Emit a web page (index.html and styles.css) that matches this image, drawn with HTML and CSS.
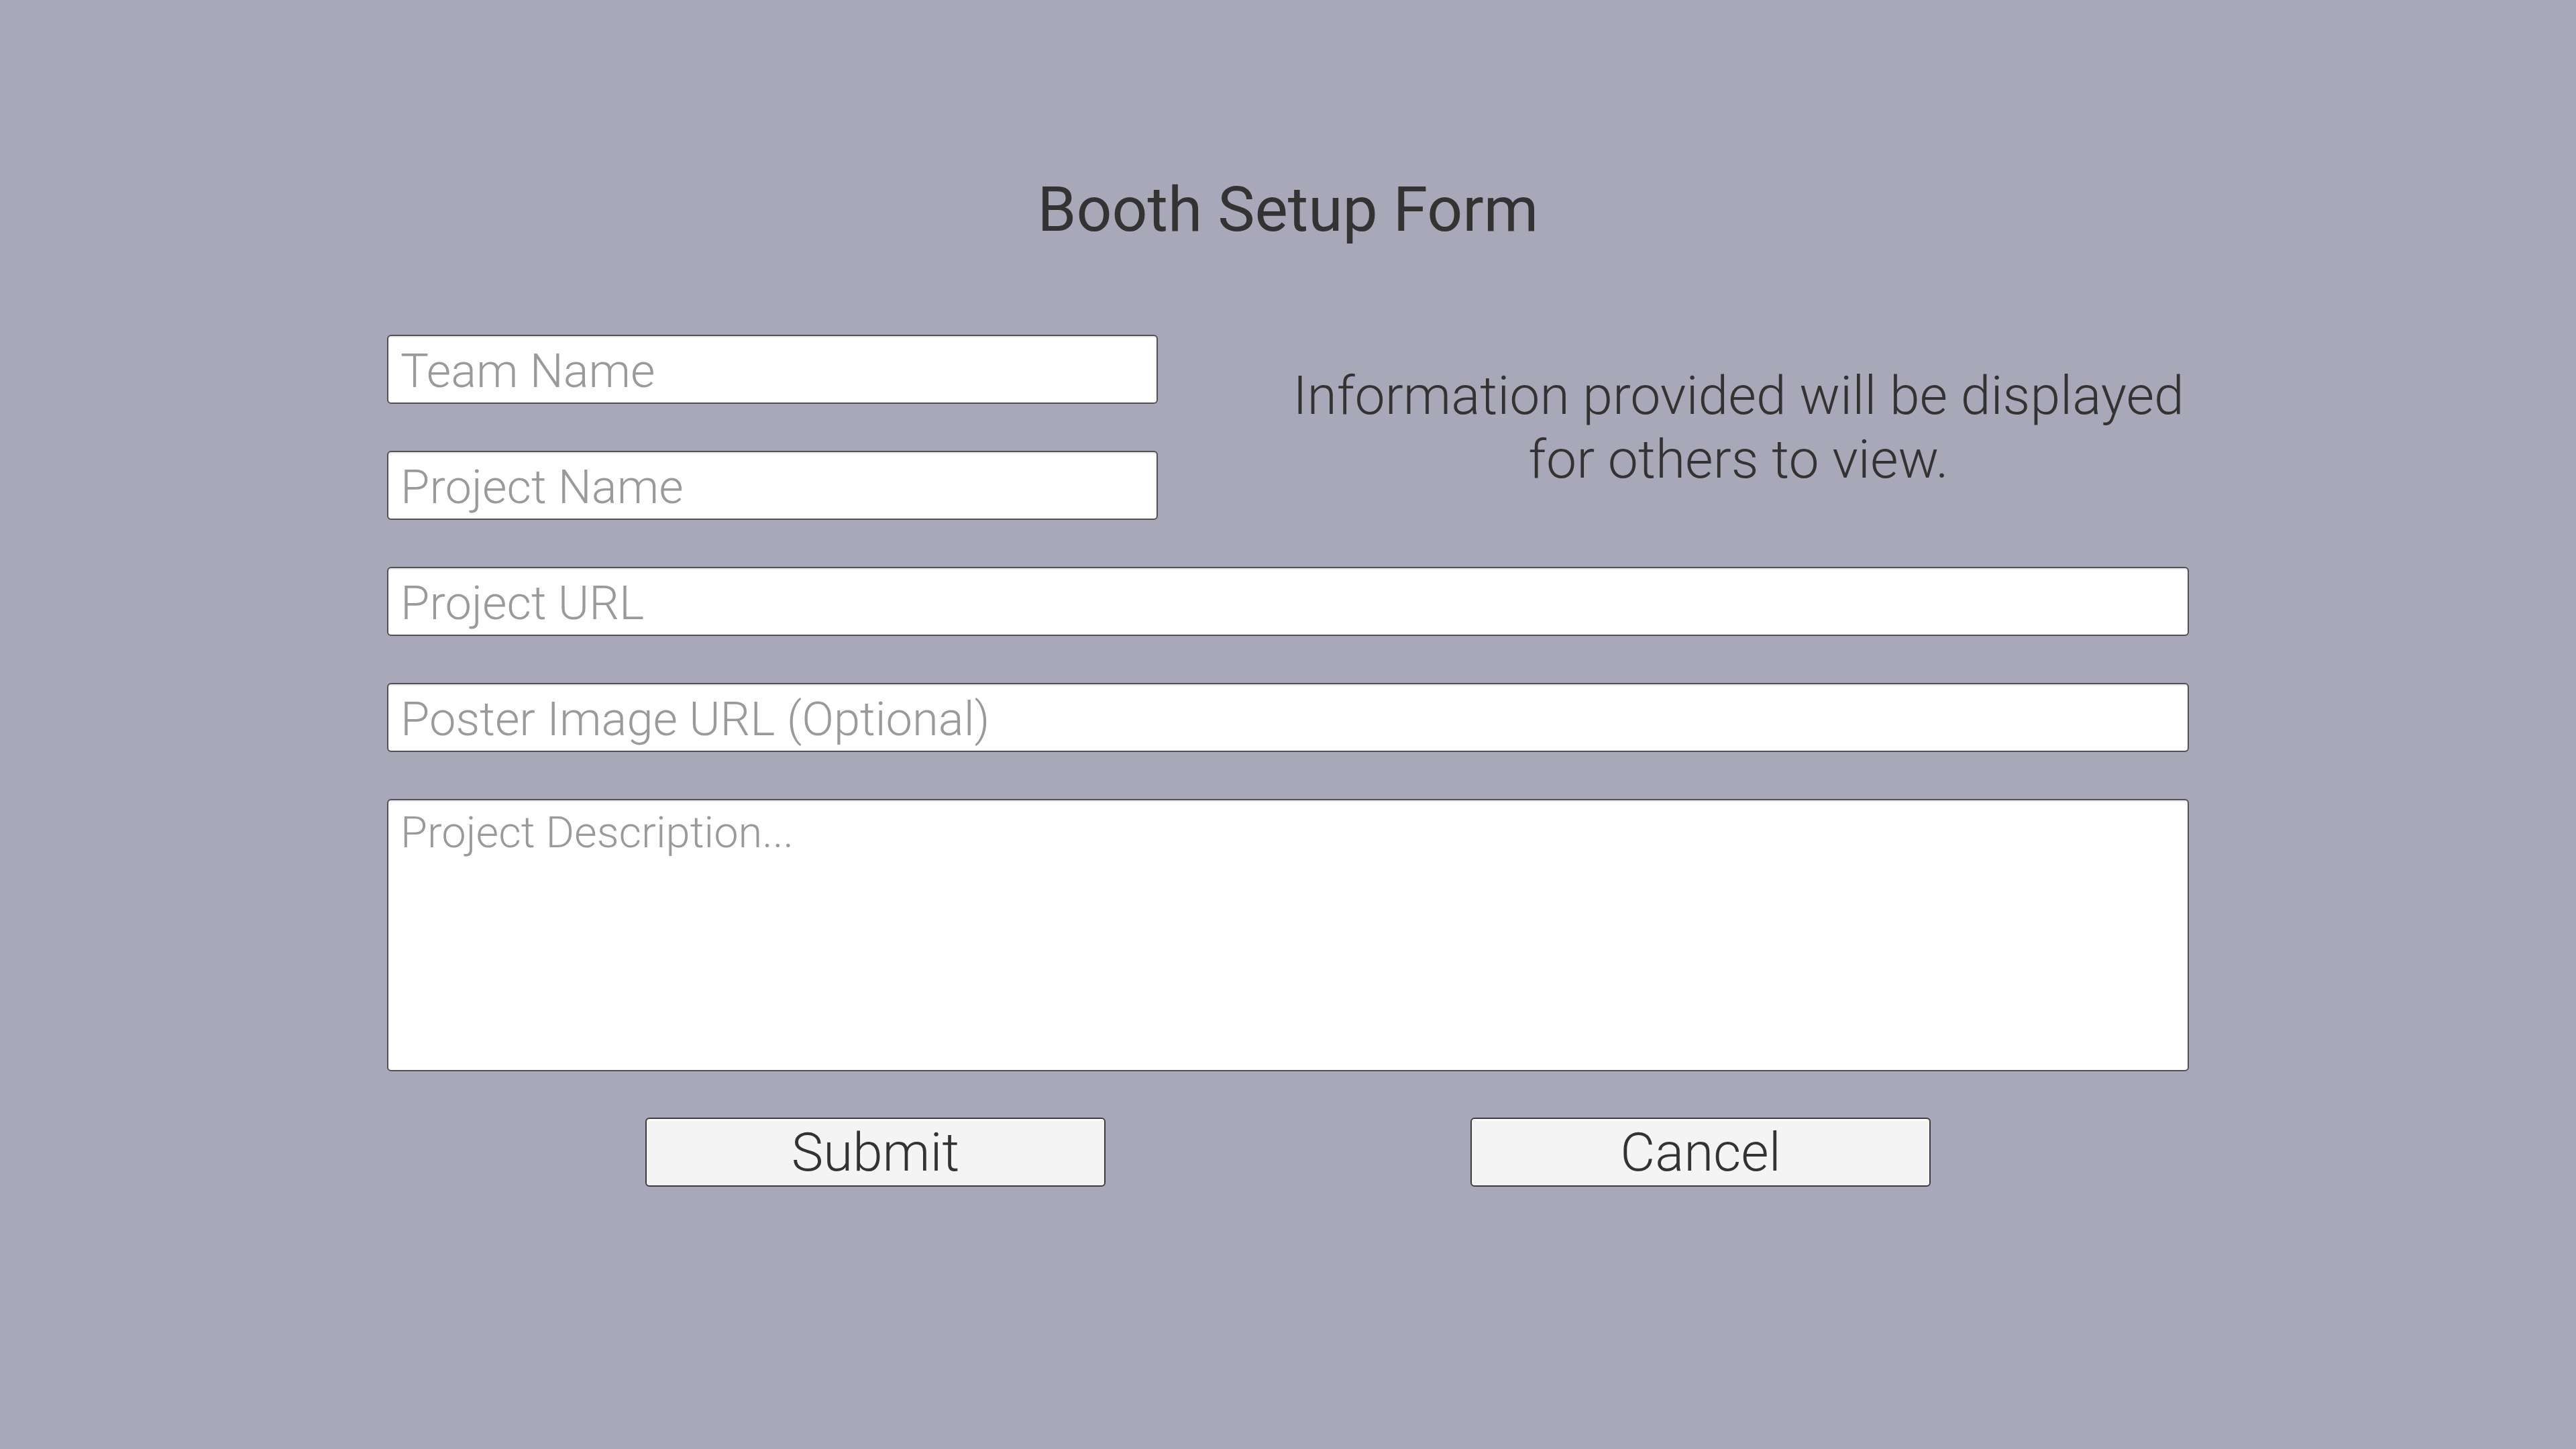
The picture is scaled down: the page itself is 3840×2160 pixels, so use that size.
FILE: index.html
```html
<!DOCTYPE html>
<html lang="en">
<head>
<meta charset="utf-8">
<title>Booth Setup Form</title>
<link rel="stylesheet" href="styles.css">
</head>
<body>
<main class="page">
  <h1 class="title">Booth Setup Form</h1>
  <form class="form">
    <div class="top-row">
      <div class="short-fields">
        <input class="field field-short" type="text" placeholder="Team Name">
        <input class="field field-short" type="text" placeholder="Project Name">
      </div>
      <p class="info">Information provided will be displayed<br>for others to view.</p>
    </div>
    <input class="field" type="text" placeholder="Project URL">
    <input class="field" type="text" placeholder="Poster Image URL (Optional)">
    <textarea class="area" placeholder="Project Description..."></textarea>
    <div class="actions">
      <button class="btn" type="button">Submit</button>
      <button class="btn" type="button">Cancel</button>
    </div>
  </form>
</main>
</body>
</html>
```
FILE: styles.css
```css
html, body {
  margin: 0;
  padding: 0;
}
body {
  background: #a9a8b9;
  width: 3840px;
  height: 2160px;
  overflow: hidden;
  font-family: Roboto, "Liberation Sans", sans-serif;
  color: #333333;
}
.page {
  display: flex;
  flex-direction: column;
  align-items: center;
  padding-top: 258px;
}
.title {
  margin: 0;
  font-size: 93px;
  font-weight: 400;
  line-height: 109px;
  color: #333333;
}
.form {
  margin-top: 132px;
  width: 2686px;
  display: flex;
  flex-direction: column;
  gap: 70px;
}
.top-row {
  display: grid;
  grid-template-columns: 1343px 1343px;
}
.short-fields {
  display: flex;
  flex-direction: column;
  gap: 70px;
}
.field {
  box-sizing: border-box;
  height: 103px;
  width: 100%;
  margin: 0;
  padding: 5px 16px 0 18px;
  border: 2px solid #505057;
  border-radius: 6px;
  background: #ffffff;
  box-shadow: inset 0 3px 2px -1px rgba(0, 0, 0, 0.10);
  font-family: Roboto, "Liberation Sans", sans-serif;
  font-weight: 300;
  font-size: 70.5px;
  color: #333333;
  outline: none;
}
.field-short {
  width: 1149px;
}
.field::placeholder,
.area::placeholder {
  color: #9a9a9a;
  opacity: 1;
}
.info {
  margin: 43px 0 0 0;
  text-align: center;
  white-space: nowrap;
  font-size: 80.5px;
  font-weight: 300;
  line-height: 95px;
  color: #333333;
}
.area {
  box-sizing: border-box;
  height: 406px;
  width: 100%;
  margin: 0;
  padding: 10px 18px;
  border: 2px solid #505057;
  border-radius: 6px;
  background: #ffffff;
  box-shadow: inset 0 3px 2px -1px rgba(0, 0, 0, 0.10);
  font-family: Roboto, "Liberation Sans", sans-serif;
  font-weight: 300;
  font-size: 65px;
  line-height: normal;
  color: #333333;
  resize: none;
  outline: none;
}
.actions {
  display: flex;
  justify-content: space-between;
  padding: 0 385px 0 385px;
  margin-top: -1px;
}
.btn {
  box-sizing: border-box;
  width: 686px;
  height: 103px;
  margin: 0;
  padding: 0;
  border: 2px solid #3c3c40;
  border-radius: 6px;
  background: #f4f4f4;
  box-shadow: inset 0 3px 0 #ffffff;
  font-family: Roboto, "Liberation Sans", sans-serif;
  font-weight: 300;
  font-size: 80px;
  line-height: 1;
  color: #333333;
  cursor: pointer;
}
```
